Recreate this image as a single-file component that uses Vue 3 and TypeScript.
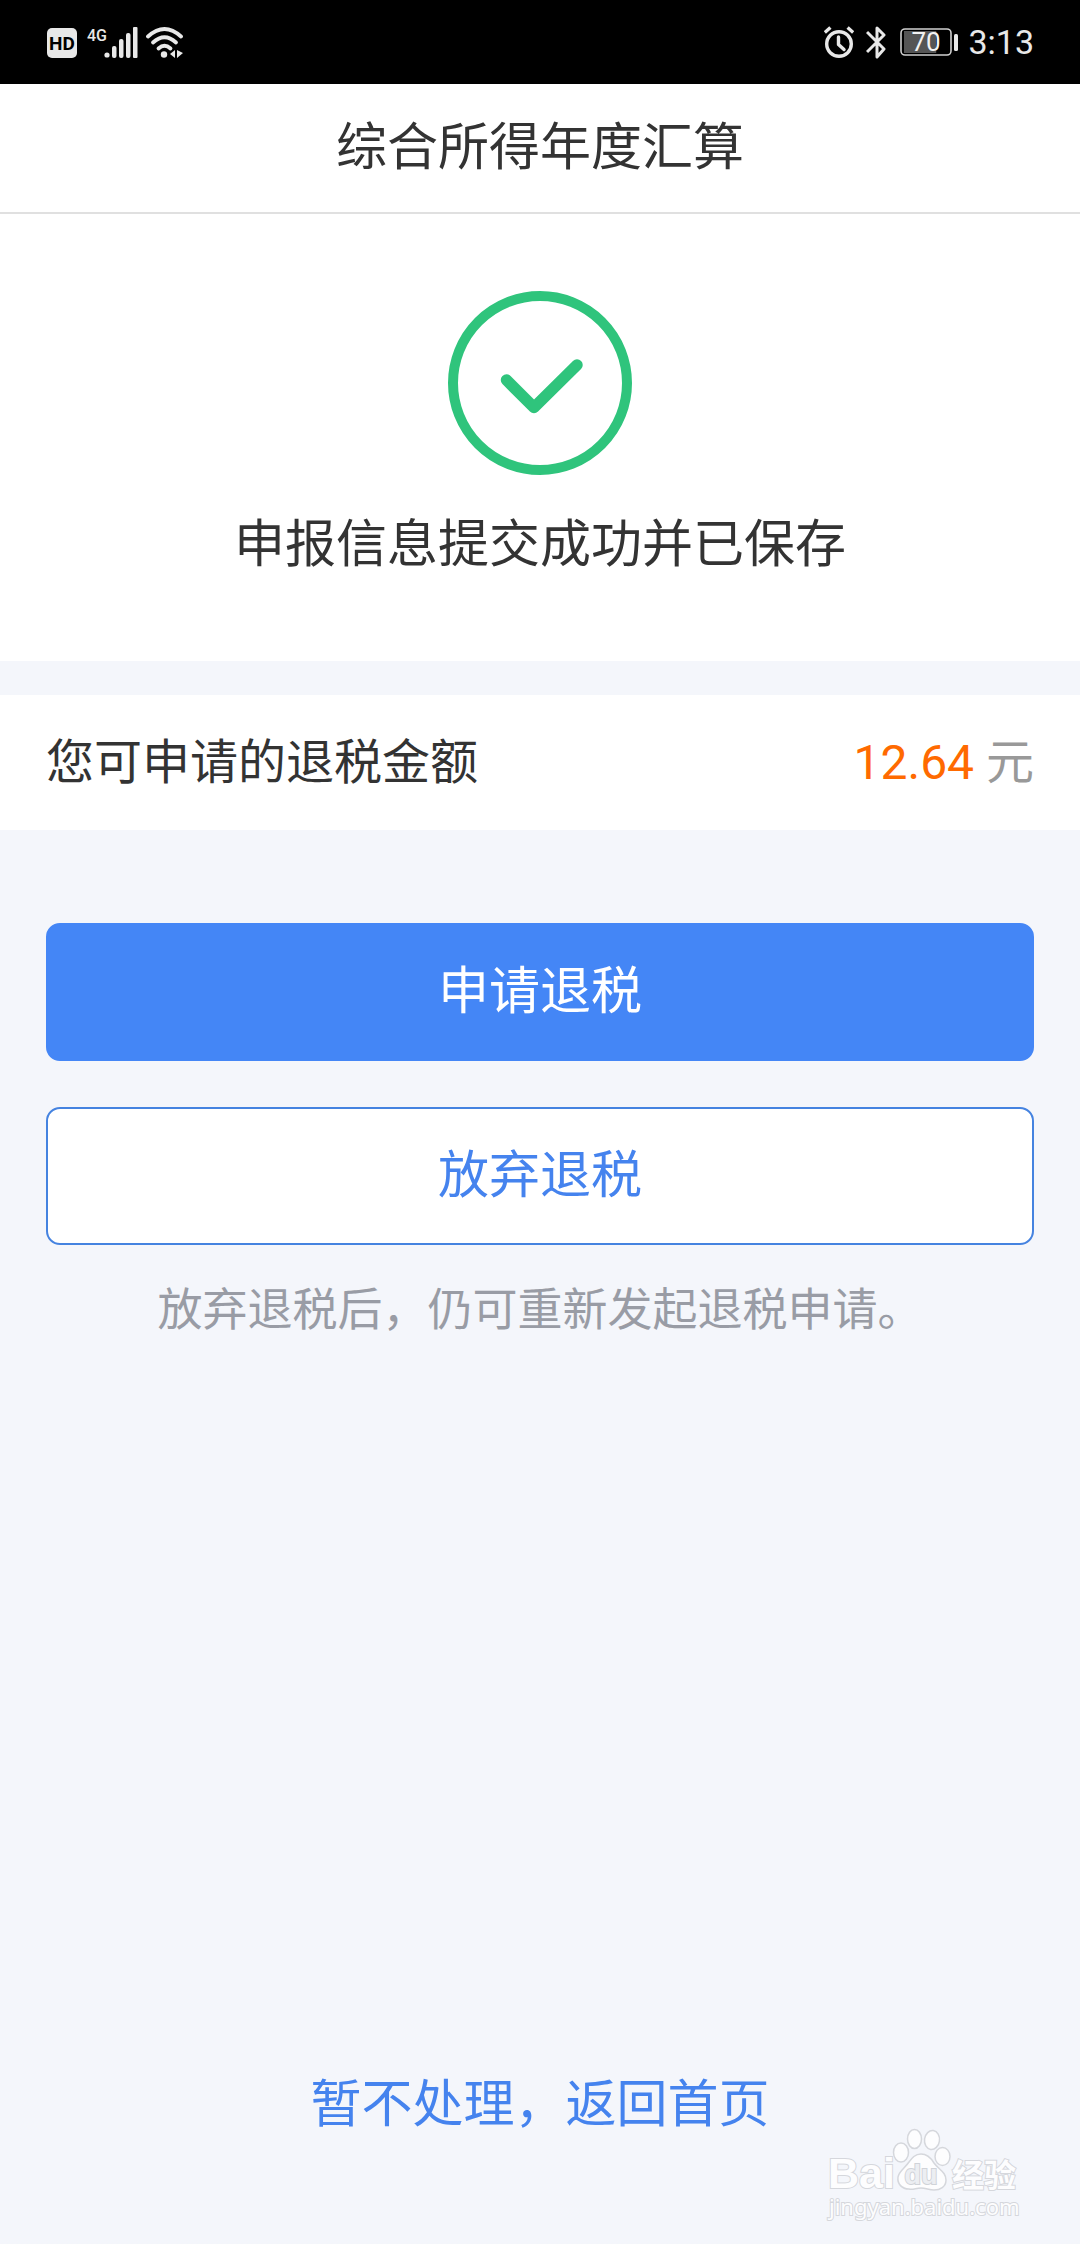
<script setup lang="ts">
import { ref } from 'vue'

const title = '综合所得年度汇算'
const amount = ref<number>(12.64)
const battery = ref<number>(70)
const clock = ref<string>('3:13')
</script>

<template>
  <div class="page">
    <div class="status">
      <div class="status-side">
        <svg class="net" width="138" height="36" viewBox="0 0 138 36" role="img" aria-label="HD 4G">
          <rect x="1" y="4" width="30" height="30" rx="5" fill="#e8e8e8" />
          <text x="16" y="26" text-anchor="middle" class="hd">HD</text>
          <text x="41" y="17" class="g4">4G</text>
          <g fill="#e8e8e8">
            <circle cx="61" cy="31" r="2.600" />
            <rect x="66" y="22" width="4.500" height="12" rx="2" />
            <rect x="73" y="15" width="4.500" height="19" rx="2" />
            <rect x="80" y="9" width="4.500" height="25" rx="2" />
            <rect x="87" y="3" width="4.500" height="31" rx="1" />
            <circle cx="118" cy="30.500" r="3.2" />
            <path d="M129 26v8l-5-4zM131 26v8l6-5z" />
          </g>
          <g fill="none" stroke="#e8e8e8" stroke-width="3.8" stroke-linecap="round">
            <path d="M102 12.500Q118.500 -2.500 135 12.500" />
            <path d="M107 18.500Q118.500 8 130 18.500" />
            <path d="M112.500 24.500Q118.500 19 124.500 24.500" />
          </g>
        </svg>
      </div>
      <div class="status-side">
        <svg width="30" height="34" viewBox="0 0 30 34" fill="none" stroke="#e8e8e8" stroke-width="3.4" aria-hidden="true">
          <circle cx="15" cy="19" r="12.300" />
          <path d="M14.500 12v7.500l5.500 5" stroke-linecap="round" stroke-linejoin="round" />
          <path d="M.800 7.500l5.600-5M29.200 7.500l-5.600-5" />
        </svg>
        <svg class="bt" width="20" height="34" viewBox="0 0 20 34" fill="none" stroke="#e8e8e8" stroke-width="3" aria-hidden="true">
          <path d="M1 7l17 17-7 8V3l7 7L1 27" stroke-linejoin="round" />
        </svg>
        <svg class="cell" width="58" height="30" viewBox="0 0 58 30" role="img" aria-label="电量">
          <rect x="4" y="4" :width="battery * 0.46" height="22" fill="#555" />
          <rect x="1" y="2" width="50" height="26" rx="4" fill="none" stroke="#cfcfcf" stroke-width="1.600" />
          <rect x="54" y="7" width="4" height="17" rx="1.500" fill="#e8e8e8" />
          <text x="26" y="24" text-anchor="middle" class="level">{{ battery }}</text>
        </svg>
        <span class="clock">{{ clock }}</span>
      </div>
    </div>

    <header class="header">
      <h1>{{ title }}</h1>
    </header>

    <main class="main">
      <section class="result">
        <svg width="184" height="184" viewBox="0 0 184 184" fill="none" stroke="#2fc47c" aria-hidden="true">
          <circle cx="92" cy="92" r="87" stroke-width="10" />
          <path d="M58.500 89L86 116.500L129 74" stroke-width="11.500" stroke-linecap="round" stroke-linejoin="round" />
        </svg>
        <p>申报信息提交成功并已保存</p>
      </section>

      <section class="refund">
        <span>您可申请的退税金额</span>
        <span class="unit"><span class="amount">{{ amount.toFixed(2) }}</span> 元</span>
      </section>

      <div class="actions">
        <button type="button" class="btn primary">申请退税</button>
        <button type="button" class="btn">放弃退税</button>
        <p class="hint">放弃退税后，仍可重新发起退税申请。</p>
      </div>
    </main>

    <footer class="footer">
      <a href="#">暂不处理，返回首页</a>
    </footer>

    <svg class="mark" width="210" height="100" viewBox="0 0 210 100" aria-hidden="true">
      <g fill="#fdfdfe" stroke="#d5d7dc" stroke-width="1.500">
        <text x="6" y="62" class="mark-bai">Bai</text>
        <ellipse cx="79" cy="26.500" rx="7.500" ry="9.500" />
        <ellipse cx="92.500" cy="13" rx="7" ry="9.500" />
        <ellipse cx="110" cy="14" rx="7.500" ry="9.500" transform="rotate(8 110 14)" />
        <ellipse cx="120.500" cy="30.500" rx="7.500" ry="9" />
        <path d="M99 28C105 28 109 32 112 37C117 44 124 46 124 54C124 61 118 64 112 64C107 64 104 62 99 62C94 62 91 64 87 63C80 63 75 58 76 51C77 45 83 42 87 36C90 32 93 28 99 28Z" />
        <text x="130" y="61" class="mark-cn">经验</text>
        <text x="7" y="89" class="mark-url">jingyan.baidu.com</text>
      </g>
      <text x="99" y="58" text-anchor="middle" class="mark-du">du</text>
    </svg>
  </div>
</template>

<style>
body {
  margin: 0;
  background: #f4f6fb;
}
</style>

<style scoped>
.page {
  position: relative;
  display: flex;
  flex-direction: column;
  min-height: 100vh;
  background: #f4f6fb;
  color: #333;
  font-family: Roboto, "Noto Sans CJK SC", sans-serif;
  font-size: 51px;
  line-height: 60px;
}

h1,
p {
  margin: 0;
  font-size: 51px;
  font-weight: 400;
}

.status {
  display: flex;
  align-items: center;
  justify-content: space-between;
  height: 84px;
  padding: 0 46px;
  background: #000;
  color: #e8e8e8;
}

.status-side {
  display: flex;
  align-items: center;
}

.hd {
  fill: #000;
  font: 700 19px Roboto, sans-serif;
}

.g4 {
  fill: #e8e8e8;
  font: 500 16px Roboto, sans-serif;
}

.bt {
  margin-left: 12px;
}

.cell {
  margin-left: 14px;
}

.level {
  fill: #f2f2f2;
  font: 400 26px Roboto, sans-serif;
}

.clock {
  margin-left: 10px;
  font-size: 34px;
  line-height: 40px;
}

.header {
  padding: 34px 48px;
  background: #fff;
  border-bottom: 2px solid #e0e0e0;
  text-align: center;
}

.result {
  display: flex;
  flex-direction: column;
  align-items: center;
  gap: 40px;
  padding: 77px 48px 86px;
  background: #fff;
}

.refund {
  display: flex;
  justify-content: space-between;
  margin-top: 34px;
  padding: 38px 46px 37px;
  background: #fff;
  font-size: 48px;
}

.unit {
  color: #999;
}

.amount {
  color: #ff6a00;
}

.actions {
  display: flex;
  flex-direction: column;
  gap: 46px;
  padding: 93px 46px 0;
}

.btn {
  padding: 37px 0;
  border: 2px solid #4583e0;
  border-radius: 14px;
  background: #fff;
  color: #4583ee;
  font: inherit;
  cursor: pointer;
}

.btn.primary {
  border-color: #4486f6;
  background: #4486f6;
  color: #fff;
}

.hint {
  margin-top: -10px;
  color: #999ca5;
  font-size: 45px;
  text-align: center;
}

.footer {
  margin-top: auto;
  padding: 48px 48px 109px;
  text-align: center;
}

.footer a {
  color: #4583ee;
  text-decoration: none;
}

.mark {
  position: absolute;
  right: 48px;
  bottom: 18px;
}

.mark text {
  paint-order: stroke;
  stroke-width: 2px;
}

.mark-bai {
  font: 700 43px "Liberation Sans", sans-serif;
}

.mark-cn {
  font: 700 32px "Noto Sans CJK SC", sans-serif;
}

.mark-url {
  font: 400 22px "Noto Sans", sans-serif;
}

.mark-du {
  fill: #eceef2;
  stroke: #d0d3d8;
  font: 700 27px "Liberation Sans", sans-serif;
}
</style>
